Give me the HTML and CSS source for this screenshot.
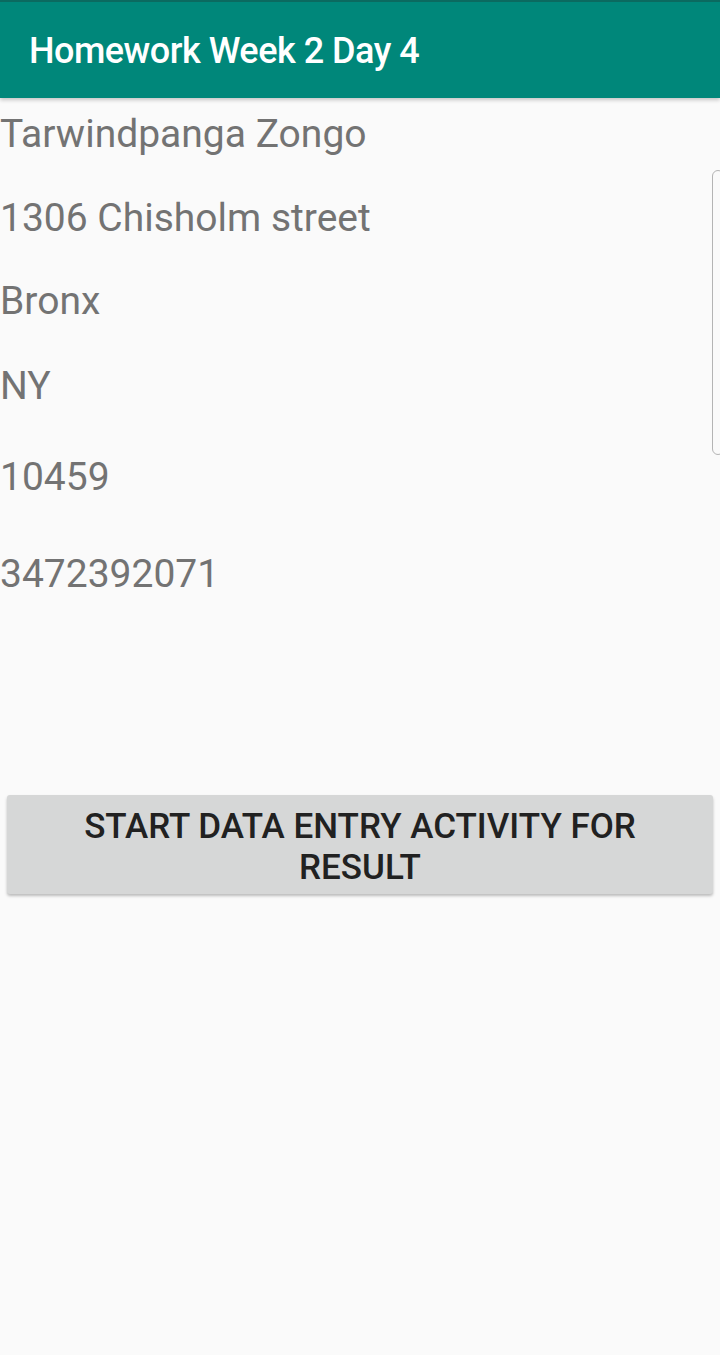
FILE: index.html
```html
<!DOCTYPE html>
<html>
<head>
<meta charset="utf-8">
<link rel="stylesheet" href="styles.css">
</head>
<body>
<header class="toolbar">
  <h1 class="title">Homework Week 2 Day 4</h1>
</header>
<main class="content">
  <p class="field f-name">Tarwindpanga Zongo</p>
  <p class="field f-street">1306 Chisholm street</p>
  <p class="field f-city">Bronx</p>
  <p class="field f-state">NY</p>
  <p class="field f-zip">10459</p>
  <p class="field f-phone">3472392071</p>
  <div class="btn-wrap">
    <button class="btn">START DATA ENTRY ACTIVITY FOR RESULT</button>
  </div>
</main>
<div class="edge-handle"></div>
</body>
</html>
```

FILE: styles.css
```css
html, body {
  margin: 0;
  padding: 0;
  background: #fafafa;
  width: 720px;
  height: 1355px;
  overflow: hidden;
  font-family: Roboto, "Noto Sans", sans-serif;
}
.toolbar {
  height: 98px;
  background: #00877a;
  border-top: 2px solid #0b6a60;
  box-sizing: border-box;
  box-shadow: 0 2px 4px rgba(0,0,0,0.22);
  display: flex;
  align-items: center;
  padding-left: 29px;
  position: relative;
  z-index: 1;
}
.title {
  margin: 0;
  color: #ffffff;
  font-weight: 500;
  font-size: 36px;
  letter-spacing: -0.5px;
  padding-top: 2px;
}
.content {
  display: flex;
  flex-direction: column;
}
.field {
  margin: 0;
  color: #737373;
  font-size: 39px;
  line-height: 44px;
  height: 44px;
  white-space: nowrap;
}
.f-name { margin-top: 14px; }
.f-street { margin-top: 40px; }
.f-city { margin-top: 39px; }
.f-state { margin-top: 41px; }
.f-zip { margin-top: 47px; }
.f-phone { margin-top: 53px; }
.btn-wrap {
  margin-top: 199px;
  padding: 0 7px;
}
.btn {
  width: 100%;
  height: 99px;
  background: #d6d7d7;
  border: none;
  border-radius: 3px;
  box-shadow: 0 2px 3px rgba(0,0,0,0.25);
  color: #212121;
  font-family: Roboto, "Noto Sans", sans-serif;
  font-weight: 500;
  font-size: 35px;
  line-height: 41px;
  letter-spacing: 0;
  padding: 4px 60px 0;
  text-align: center;
}
.edge-handle {
  position: absolute;
  top: 170px;
  left: 712px;
  width: 12px;
  height: 285px;
  border: 1.5px solid #b4b4b4;
  border-radius: 8px;
  box-sizing: border-box;
}
```
